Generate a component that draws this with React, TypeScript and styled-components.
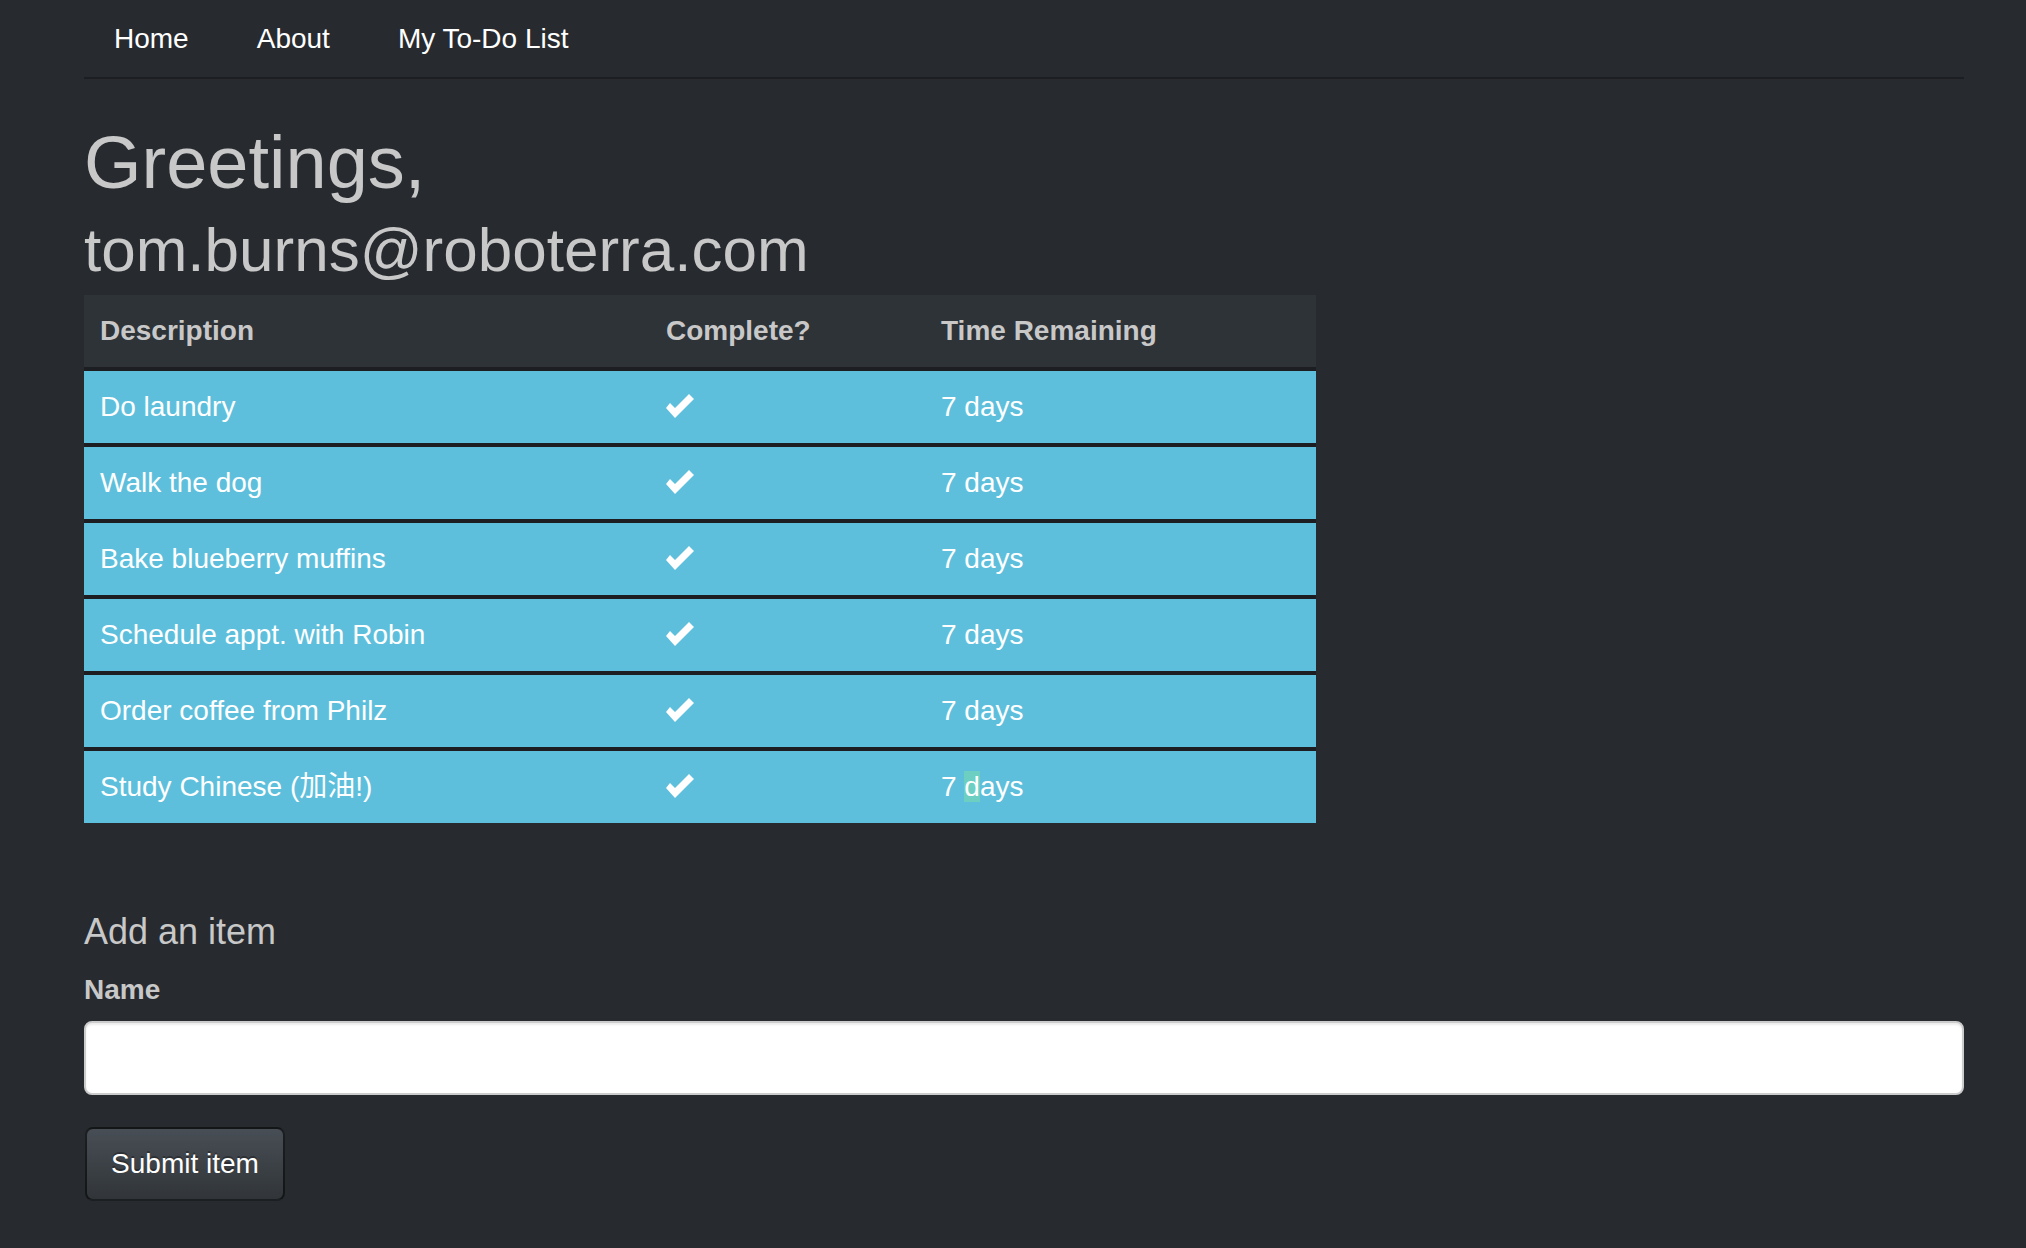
import React from "react";
import styled, { createGlobalStyle } from "styled-components";

const GlobalStyle = createGlobalStyle`
  html, body {
    margin: 0;
    padding: 0;
    background: #272b30;
  }
  body {
    font-family: "Liberation Sans", Arial, Helvetica, sans-serif;
    font-size: 28px;
    line-height: 40px;
    color: #c8c8c8;
    min-height: 1248px;
  }
  * { box-sizing: border-box; }
`;

const Container = styled.div`
  padding: 0 62px 0 84px;
`;

const NavTabs = styled.ul`
  list-style: none;
  margin: 0;
  padding: 0;
  display: flex;
  border-bottom: 2px solid #1c1e22;
`;

const NavItem = styled.li`
  margin-right: 8px;
`;

const NavLink = styled.a`
  display: block;
  padding: 19px 30px 18px;
  line-height: 40px;
  color: #ffffff;
  text-decoration: none;
  font-size: 28px;
`;

const Title = styled.h1`
  margin: 44px 0 0;
  font-size: 74px;
  line-height: 79px;
  font-weight: 400;
  color: #c8c8c8;
`;

const Email = styled.h2`
  margin: 15px 0 0;
  font-size: 62px;
  line-height: 66px;
  font-weight: 400;
  color: #c8c8c8;
`;

const Table = styled.table`
  margin-top: 12px;
  width: 1232px;
  border-collapse: separate;
  border-spacing: 0;
`;

const HeadRow = styled.tr`
  background: #2e3338;
`;

const HeadCell = styled.th<{ $w: number }>`
  width: ${(p) => p.$w}px;
  padding: 16px;
  text-align: left;
  font-weight: 700;
  color: #c8c8c8;
  line-height: 40px;
  vertical-align: top;
`;

const Row = styled.tr`
  background: #5ebfdc;
`;

const Cell = styled.td`
  padding: 16px;
  border-top: 4px solid #1c1e22;
  color: #ffffff;
  line-height: 40px;
  vertical-align: top;
`;

const ItemText = styled.span`
  font-family: "Liberation Sans", "Noto Sans CJK SC", sans-serif;
`;

const Check = styled.svg`
  display: block;
  margin: 7px 0 9px;
`;

const Mark = styled.span`
  background: #6ccfc2;
`;

const SectionTitle = styled.h4`
  margin: 89px 0 0;
  font-size: 36px;
  line-height: 40px;
  font-weight: 400;
  color: #c8c8c8;
`;

const Form = styled.form`
  display: flex;
  flex-direction: column;
  align-items: flex-start;
`;

const Label = styled.label`
  margin-top: 18px;
  font-weight: 700;
  color: #c8c8c8;
  line-height: 40px;
`;

const Input = styled.input`
  margin-top: 11px;
  width: 100%;
  height: 74px;
  border: 2px solid #cccccc;
  border-radius: 8px;
  background: #ffffff;
  box-shadow: inset 0 2px 2px rgba(0, 0, 0, 0.075);
  padding: 12px 24px;
  font-family: inherit;
  font-size: 28px;
  outline: none;
`;

const Button = styled.button`
  margin-top: 32px;
  margin-left: 1px;
  width: 200px;
  height: 74px;
  padding: 0 22px;
  border: 2px solid rgba(0, 0, 0, 0.6);
  border-radius: 8px;
  background: linear-gradient(#484e55, #3a3f44 60%, #313539);
  color: #ffffff;
  font-family: inherit;
  font-size: 28px;
  line-height: 40px;
  text-shadow: 0 -2px 0 rgba(0, 0, 0, 0.3);
  cursor: pointer;
`;

const CheckIcon = () => (
  <Check width="28" height="24" viewBox="0 0 28 24">
    <polygon points="4,9 0,14 9,24 28,5 23,0 9,14" fill="#ffffff" />
  </Check>
);

const items = [
  "Do laundry",
  "Walk the dog",
  "Bake blueberry muffins",
  "Schedule appt. with Robin",
  "Order coffee from Philz",
  "Study Chinese (加油!)",
];

export default function App() {
  return (
    <>
      <GlobalStyle />
      <Container>
        <NavTabs>
          <NavItem>
            <NavLink href="#">Home</NavLink>
          </NavItem>
          <NavItem>
            <NavLink href="#">About</NavLink>
          </NavItem>
          <NavItem>
            <NavLink href="#">My To-Do List</NavLink>
          </NavItem>
        </NavTabs>
        <Title>Greetings,</Title>
        <Email>tom.burns@roboterra.com</Email>
        <Table>
          <thead>
            <HeadRow>
              <HeadCell $w={566}>Description</HeadCell>
              <HeadCell $w={275}>Complete?</HeadCell>
              <HeadCell $w={391}>Time Remaining</HeadCell>
            </HeadRow>
          </thead>
          <tbody>
            {items.map((it, i) => (
              <Row key={it}>
                <Cell>
                  <ItemText>{it}</ItemText>
                </Cell>
                <Cell>
                  <CheckIcon />
                </Cell>
                <Cell>
                  {i === items.length - 1 ? (
                    <>
                      7 <Mark>d</Mark>ays
                    </>
                  ) : (
                    "7 days"
                  )}
                </Cell>
              </Row>
            ))}
          </tbody>
        </Table>
        <SectionTitle>Add an item</SectionTitle>
        <Form onSubmit={(e) => e.preventDefault()}>
          <Label htmlFor="name">Name</Label>
          <Input id="name" type="text" />
          <Button type="submit">Submit item</Button>
        </Form>
      </Container>
    </>
  );
}
